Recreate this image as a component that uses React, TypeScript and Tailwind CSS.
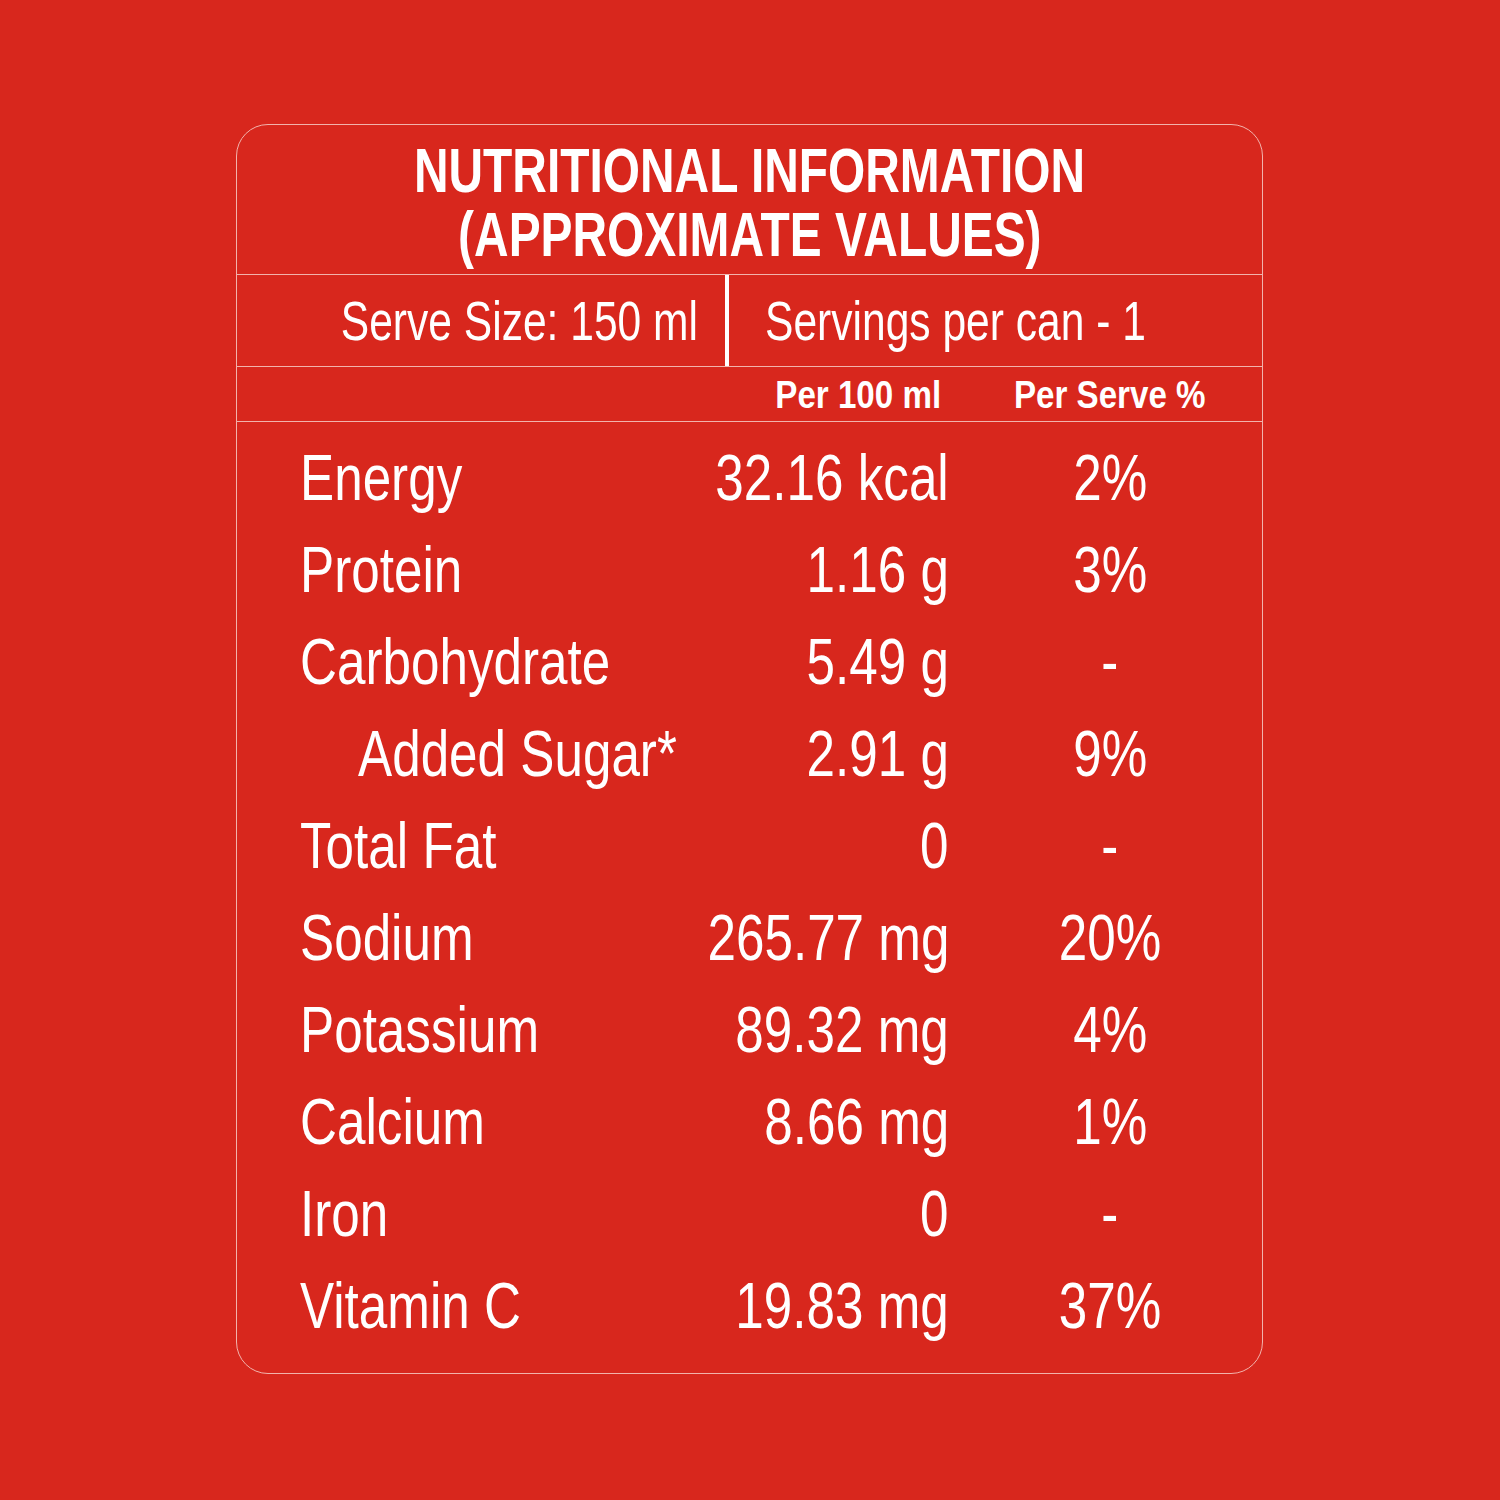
import React from "react";

const rows: { label: string; value: string; pct: string; indent?: boolean }[] = [
  { label: "Energy", value: "32.16 kcal", pct: "2%" },
  { label: "Protein", value: "1.16 g", pct: "3%" },
  { label: "Carbohydrate", value: "5.49 g", pct: "-" },
  { label: "Added Sugar*", value: "2.91 g", pct: "9%", indent: true },
  { label: "Total Fat", value: "0", pct: "-" },
  { label: "Sodium", value: "265.77 mg", pct: "20%" },
  { label: "Potassium", value: "89.32 mg", pct: "4%" },
  { label: "Calcium", value: "8.66 mg", pct: "1%" },
  { label: "Iron", value: "0", pct: "-" },
  { label: "Vitamin C", value: "19.83 mg", pct: "37%" },
];

export default function App() {
  return (
    <div
      className="w-[1500px] h-[1500px] bg-[#d8271d] pt-[124px] pl-[236px] text-white"
      style={{ fontFamily: '"Liberation Sans", Arial, sans-serif' }}
    >
      <div className="w-[1027px] h-[1250px] border border-[#f2b3ac] rounded-[32px] flex flex-col overflow-hidden">
        {/* Title */}
        <div className="h-[150px] shrink-0 border-b border-[#f2b3ac] pt-[13px] flex flex-col items-center">
          <span className="inline-block text-[63px] leading-[64px] font-bold scale-x-[0.76] origin-center whitespace-nowrap">
            NUTRITIONAL INFORMATION
          </span>
          <span className="inline-block text-[63px] leading-[64px] font-bold scale-x-[0.76] origin-center whitespace-nowrap">
            (APPROXIMATE VALUES)
          </span>
        </div>
        {/* Serve row */}
        <div className="h-[92px] shrink-0 border-b border-[#f2b3ac] flex">
          <div className="w-[488px] shrink-0 h-full flex items-center justify-end pr-[27px]">
            <span className="inline-block text-[56px] leading-[56px] scale-x-[0.76] origin-right whitespace-nowrap">
              Serve Size: 150 ml
            </span>
          </div>
          <div className="w-[4px] shrink-0 h-full bg-white" />
          <div className="flex-1 min-w-0 h-full flex items-center pl-[36px]">
            <span className="inline-block text-[56px] leading-[56px] scale-x-[0.76] origin-left whitespace-nowrap">
              Servings per can - 1
            </span>
          </div>
        </div>
        {/* Column headers */}
        <div className="h-[55px] shrink-0 border-b border-[#f2b3ac] flex items-center pl-[63px] pr-[63px]">
          <div className="flex-1 min-w-0" />
          <div className="w-[260px] shrink-0 flex justify-end pr-[8px]">
            <span className="inline-block text-[39px] leading-[39px] font-bold scale-x-[0.85] origin-right whitespace-nowrap">
              Per 100 ml
            </span>
          </div>
          <div className="w-[72px] shrink-0" />
          <div className="w-[178px] shrink-0 flex justify-center">
            <span className="inline-block text-[39px] leading-[39px] font-bold scale-x-[0.85] origin-center whitespace-nowrap">
              Per Serve %
            </span>
          </div>
        </div>
        {/* Data rows */}
        <div className="pt-[10px] flex flex-col">
          {rows.map((r) => (
            <div key={r.label} className="h-[92px] flex items-center pl-[63px] pr-[63px] text-[64px] leading-[64px]">
              <div className={`flex-1 min-w-0 ${r.indent ? "pl-[58px]" : ""}`}>
                <span className="inline-block scale-x-[0.8] origin-left whitespace-nowrap">{r.label}</span>
              </div>
              <div className="w-[260px] shrink-0 flex justify-end">
                <span className="inline-block scale-x-[0.8] origin-right whitespace-nowrap">{r.value}</span>
              </div>
              <div className="w-[72px] shrink-0" />
              <div className="w-[178px] shrink-0 flex justify-center">
                <span className="inline-block scale-x-[0.8] origin-center whitespace-nowrap">{r.pct}</span>
              </div>
            </div>
          ))}
        </div>
      </div>
    </div>
  );
}
